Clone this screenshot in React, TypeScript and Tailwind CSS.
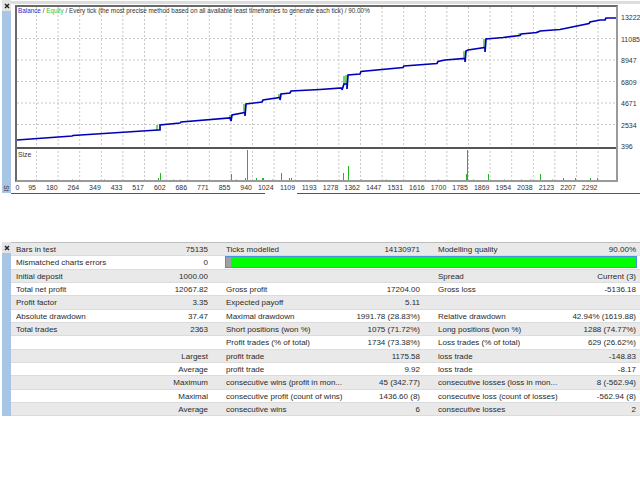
const xLabels = ["95", "180", "264", "349", "433", "517", "602", "686", "771", "855", "940", "1024", "1109", "1193", "1278", "1362", "1447", "1531", "1616", "1700", "1785", "1869", "1954", "2038", "2123", "2207", "2292"];
const yLabels = ["13222", "11085", "8947", "6809", "4671", "2534", "396"];

// points are in page pixels, the svg starts at the frame's inner corner
const OX = 17;
const OY = 7;
const balance: [number, number][] = [
  [17, 140], [72, 136], [73, 135.5], [158, 130], [160, 130], [160, 125], [180, 123], [181, 122], [230, 118], [231, 121], [232, 115],
  [245, 112.5], [245, 116], [246, 104], [262, 102], [263, 100], [280, 97.5], [280, 100], [281, 94], [290, 93], [291, 91], [320, 89.5],
  [342, 88], [342, 90], [344, 84], [347, 84], [347, 89], [348, 75], [360, 74], [361, 71.5], [403, 67.5], [404, 66], [437, 63.5],
  [438, 61.5], [445, 60], [465, 58.5], [465, 62], [466, 51], [468, 50], [485, 47.5], [485, 52], [486, 39], [503, 37.5], [520, 35.5],
  [521, 34], [537, 32.5], [540, 31], [560, 29.5], [589, 23.5], [590, 22], [600, 20], [605, 20], [606, 18], [616, 18],
];
const equityJumps = [[158, 125, 131], [245, 104, 112], [345, 76, 84], [347, 75, 84], [465, 51, 58], [485, 39, 47], [520, 33, 36], [538, 31, 33], [231, 115, 118], [280, 94, 98]];
const sizeBars: [number, number][] = [
  [72, 1], [104, 1], [158, 2], [160, 7], [173, 1], [180, 1], [231, 6], [236, 1], [247, 30], [245, 2], [256, 2], [262, 2], [263, 2], [272, 1], [281, 7], [289, 2], [291, 2],
  [343, 7], [348, 14], [361, 1], [386, 1], [403, 1], [425, 1], [438, 1], [467, 30], [466, 6], [473, 1], [488, 6], [504, 1], [521, 1], [530, 1], [540, 6], [552, 1], [563, 2], [575, 2], [590, 2], [597, 2],
];
const gridX = Array.from({ length: 27 }, (_, i) => 36 + i * 21.6);
const gridY = [38.5, 60, 81.5, 103, 124.5];

function Chart() {
  const pts = balance.map(([x, y]) => `${x - OX},${y - OY}`).join(" ");
  return (
    <svg width="599" height="173" viewBox="0 0 599 173" className="block">
      {gridX.map((x) => (
        <line key={x} x1={x - OX + 0.5} x2={x - OX + 0.5} y1="0" y2="173" stroke="#c8c8c8" strokeWidth="1" strokeDasharray="2 2" />
      ))}
      {gridY.map((y) => (
        <line key={y} x1="0" x2="599" y1={y - OY} y2={y - OY} stroke="#c8c8c8" strokeWidth="1" strokeDasharray="2 2" />
      ))}
      <rect x="0" y="140" width="599" height="2" fill="#555555" />
      {equityJumps.map(([x, a, b]) => (
        <line key={`${x}-${a}`} x1={x - OX - 1} x2={x - OX - 1} y1={a - OY} y2={b - OY} stroke="#35c435" strokeWidth="1.4" />
      ))}
      <polyline points={pts} fill="none" stroke="#0000b8" strokeWidth="1.7" />
      {sizeBars.map(([x, h]) => (
        <rect key={`${x}-${h}`} x={x - OX} y={173 - h} width="1" height={h} fill={h > 1 ? "#22b822" : "#a6dfa6"} />
      ))}
    </svg>
  );
}

function CloseMark() {
  return (
    <svg width="6" height="6" viewBox="0 0 6 6">
      <path d="M1 1l4 4M5 1l-4 4" stroke="#222222" strokeWidth="1.4" fill="none" />
    </svg>
  );
}

function ChartPanel() {
  return (
    <div className="h-[194px]">
      <div className="flex h-[193px]">
        <div className="flex w-[11px] flex-col pl-[2px]">
          <div className="flex h-[11px] w-[9px] items-center justify-center bg-[#e4e4e4]">
            <CloseMark />
          </div>
          <div className="flex flex-1 items-end justify-center bg-[#a9c5e4]">
            <span className="mb-[2px] rotate-90 text-[6.5px] leading-none text-[#333333]">St</span>
          </div>
        </div>
        <div className="flex flex-1 flex-col">
          <div className="mt-[1px] h-[3px] bg-[#dddddd]" />
          <div className="flex flex-1 pl-[4px]">
            <div className="w-[603px]">
              <div className="relative mt-[1px] h-[177px] border-2 border-[#6a6a6a] border-r-[#9a9a9a] border-b-[#9a9a9a] bg-white">
                <Chart />
                <div className="absolute left-[1px] top-0 whitespace-nowrap text-[6.33px] leading-[8px] text-[#333333]">
                  <span className="text-[#2a2ac8]">Balance</span> / <span className="text-[#2fbf4f]">Equity</span> / Every tick (the most precise method based on all available least timeframes to generate each tick) / 90.00%
                </div>
                <div className="absolute left-[1px] top-[141px] text-[6.8px] leading-[13px] text-[#333333]">Size</div>
              </div>
              <div className="flex pt-[1px] text-[7px] leading-[10px] text-[#333333]">
                <div className="w-[5px] text-center">0</div>
                <div className="w-[16px] text-right">{xLabels[0]}</div>
                {xLabels.slice(1).map((l) => (
                  <div key={l} className="w-[21.6px] whitespace-nowrap text-right">{l}</div>
                ))}
              </div>
            </div>
            <div className="flex h-[152px] w-[22px] flex-col pl-[3px] pt-[9px] text-[7px] leading-[10px] text-[#333333]">
              {yLabels.map((l) => (
                <div key={l} className="h-[21.5px] shrink-0">{l}</div>
              ))}
            </div>
          </div>
        </div>
      </div>
      <div className="flex h-px justify-between pl-[11px]">
        <div className="w-[254px] bg-[#555555]" />
        <div className="w-[343px] bg-[#555555]" />
      </div>
    </div>
  );
}

type Row = { a?: string; av?: string; b?: string; bv?: string; c?: string; cv?: string; quality?: boolean };

const rows: Row[] = [
  { a: "Bars in test", av: "75135", b: "Ticks modelled", bv: "14130971", c: "Modelling quality", cv: "90.00%" },
  { a: "Mismatched charts errors", av: "0", quality: true },
  { a: "Initial deposit", av: "1000.00", c: "Spread", cv: "Current (3)" },
  { a: "Total net profit", av: "12067.82", b: "Gross profit", bv: "17204.00", c: "Gross loss", cv: "-5136.18" },
  { a: "Profit factor", av: "3.35", b: "Expected payoff", bv: "5.11" },
  { a: "Absolute drawdown", av: "37.47", b: "Maximal drawdown", bv: "1991.78 (28.83%)", c: "Relative drawdown", cv: "42.94% (1619.88)" },
  { a: "Total trades", av: "2363", b: "Short positions (won %)", bv: "1075 (71.72%)", c: "Long positions (won %)", cv: "1288 (74.77%)" },
  { b: "Profit trades (% of total)", bv: "1734 (73.38%)", c: "Loss trades (% of total)", cv: "629 (26.62%)" },
  { av: "Largest", b: "profit trade", bv: "1175.58", c: "loss trade", cv: "-148.83" },
  { av: "Average", b: "profit trade", bv: "9.92", c: "loss trade", cv: "-8.17" },
  { av: "Maximum", b: "consecutive wins (profit in mon...", bv: "45 (342.77)", c: "consecutive losses (loss in mon...", cv: "8 (-562.94)" },
  { av: "Maximal", b: "consecutive profit (count of wins)", bv: "1436.60 (8)", c: "consecutive loss (count of losses)", cv: "-562.94 (8)" },
  { av: "Average", b: "consecutive wins", bv: "6", c: "consecutive losses", cv: "2" },
];

function Cell({ label, value }: { label?: string; value?: string }) {
  return (
    <div className="flex justify-between whitespace-nowrap">
      <span>{label}</span>
      <span>{value}</span>
    </div>
  );
}

function StatsPanel() {
  return (
    <div className="flex">
      <div className="flex w-[11px] flex-col pl-[2px]">
        <div className="flex h-[11px] w-[9px] items-center justify-center bg-[#e4e4e4]">
          <CloseMark />
        </div>
        <div className="flex-1 bg-[#a9c5e4]" />
      </div>
      <div className="flex-1 border-t border-[#bdbdbd]">
        {rows.map((r, i) => (
          <div
            key={i}
            className={`grid h-[13.33px] grid-cols-[192px_194px_198px] gap-x-[18px] border-b border-[#dcdcdc] pl-[5px] text-[8px] leading-[13.5px] text-[#2a2a2a] ${i % 2 === 0 ? "bg-[#e9e9e9]" : "bg-white"}`}
          >
            <Cell label={r.a} value={r.av} />
            {r.quality ? (
              <div className="col-span-2 -ml-px mr-[-1px] flex h-[12px] border border-[#4a90e2] bg-[#00ff00]">
                <div className="w-[5px] bg-[#a0a0a0]" />
              </div>
            ) : (
              <>
                <Cell label={r.b} value={r.bv} />
                <Cell label={r.c} value={r.cv} />
              </>
            )}
          </div>
        ))}
      </div>
    </div>
  );
}

export default function App() {
  return (
    <div className="h-[480px] w-[640px] overflow-hidden bg-white font-['Liberation_Sans','Noto_Sans',sans-serif]">
      <ChartPanel />
      <div className="h-[48px]" />
      <StatsPanel />
    </div>
  );
}
